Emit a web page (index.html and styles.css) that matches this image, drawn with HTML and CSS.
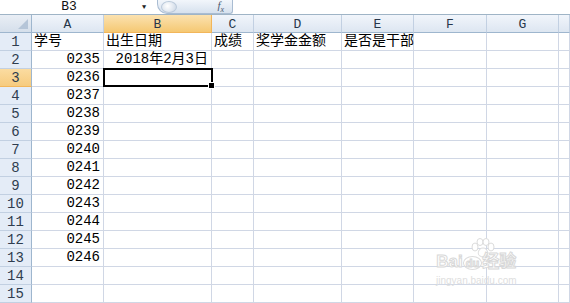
FILE: index.html
```
<!DOCTYPE html>
<html lang="zh-CN">
<head>
    <meta charset="UTF-8">
    <title>Sheet1</title>
    <link rel="stylesheet" href="styles.css">
</head>
<body>
    <div class="formula-bar">
        <div class="name-box">B3</div>
        <div class="name-arrow">&#9660;</div>
        <div class="fx-pill">
            <span class="pill-knob"></span>
            <span class="fx">f<sub>x</sub></span>
        </div>
        <div class="formula-input"></div>
    </div>

    <div class="sheet">
        <div class="corner"></div>
        <div class="col-head">A</div>
        <div class="col-head active">B</div>
        <div class="col-head">C</div>
        <div class="col-head">D</div>
        <div class="col-head">E</div>
        <div class="col-head">F</div>
        <div class="col-head">G</div>
        <div class="col-head"></div>

        <div class="row-head">1</div>
        <div class="cell">学号</div>
        <div class="cell">出生日期</div>
        <div class="cell">成绩</div>
        <div class="cell">奖学金金额</div>
        <div class="cell overflow">是否是干部</div>
        <div class="cell"></div><div class="cell"></div><div class="cell"></div>

        <div class="row-head">2</div>
        <div class="cell num">0235</div>
        <div class="cell num">2018年2月3日</div>
        <div class="cell"></div><div class="cell"></div><div class="cell"></div><div class="cell"></div><div class="cell"></div><div class="cell"></div>

        <div class="row-head active">3</div>
        <div class="cell num">0236</div>
        <div class="cell selected"></div>
        <div class="cell"></div><div class="cell"></div><div class="cell"></div><div class="cell"></div><div class="cell"></div><div class="cell"></div>
    </div>

    <div class="sheet" id="rest"></div>

    <div class="watermark">
        <svg class="wm-paw" width="26" height="20" viewBox="0 0 26 20">
            <g fill="#fff" stroke="#dcdcdc" stroke-width="1">
                <ellipse cx="5" cy="9" rx="3" ry="4"/>
                <ellipse cx="10" cy="4" rx="3" ry="3.5"/>
                <ellipse cx="16" cy="4" rx="3" ry="3.5"/>
                <ellipse cx="21" cy="9" rx="3" ry="4"/>
                <path d="M13 10 C8 10 7 17 10 18 C12 19 14 19 16 18 C19 17 18 10 13 10 Z"/>
            </g>
        </svg>
        <div class="wm-logo">Bai<span class="wm-du">du</span>经验</div>
        <div class="wm-url">jingyan.baidu.com</div>
    </div>

    <script>
        var rest = document.getElementById('rest');
        for (var r = 4; r <= 15; r++) {
            var html = '<div class="row-head">' + r + '</div>';
            var id = r <= 13 ? '0' + (233 + r) : '';
            html += '<div class="cell num">' + id + '</div>';
            for (var c = 0; c < 7; c++) html += '<div class="cell"></div>';
            rest.insertAdjacentHTML('beforeend', html);
        }
    </script>
</body>
</html>
```

FILE: styles.css
```
* {
    margin: 0;
    padding: 0;
    box-sizing: border-box;
}

body {
    width: 570px;
    height: 303px;
    overflow: hidden;
    background: #fff;
    font-family: "Liberation Mono", "Noto Sans CJK SC", monospace;
    font-size: 13px;
    color: #000;
    position: relative;
}

.formula-bar {
    height: 15px;
    display: flex;
    align-items: center;
    border-bottom: 1px solid #9fb4c6;
    background: #fff;
}

.name-box {
    width: 138px;
    text-align: center;
    font-size: 13px;
    line-height: 14px;
    color: #111;
}

.name-arrow {
    width: 19px;
    font-size: 7px;
    color: #222;
    text-align: left;
    padding-left: 4px;
}

.fx-pill {
    width: 76px;
    height: 14px;
    display: flex;
    align-items: center;
    justify-content: space-between;
    background: linear-gradient(#f2f6fb, #d6e1ee);
    border: 1px solid #a9bcd2;
    border-top: none;
    border-radius: 0 0 3px 10px;
    padding: 0 8px 0 3px;
}

.pill-knob {
    width: 16px;
    height: 12px;
    border-radius: 50%;
    background: radial-gradient(circle at 40% 40%, #ffffff, #c9d5e4);
    border: 1px solid #bac9da;
}

.fx {
    font-family: "Liberation Serif", serif;
    font-style: italic;
    font-size: 11px;
    color: #4a5a70;
}

.fx sub {
    font-size: 8px;
}

.formula-input {
    flex: 1;
}

.sheet {
    display: grid;
    grid-template-columns: 32px 72px 108px 42px 88px 72px 73px 72px 1fr;
    grid-auto-rows: 18px;
}

.sheet:first-of-type {
    grid-template-rows: 21px;
}

.corner {
    background: linear-gradient(#e9eef5, #d5dfeb);
    border-right: 1px solid #9eb6ce;
    border-bottom: 1px solid #9eb6ce;
    position: relative;
}

.corner::after {
    content: "";
    position: absolute;
    right: 3px;
    bottom: 3px;
    border-left: 10px solid transparent;
    border-bottom: 10px solid #b5c5d8;
}

.col-head {
    background: linear-gradient(#f1f5fb, #dde6f1);
    border-right: 1px solid #c2d0e2;
    border-bottom: 1px solid #9eb6ce;
    text-align: center;
    line-height: 20px;
    font-family: "Liberation Mono", monospace;
    font-size: 13px;
    color: #27364a;
}

.col-head.active {
    background: linear-gradient(#fbe2b0, #f5c873);
    border-right-color: #f2b65a;
    border-bottom-color: #f2b65a;
}

.row-head {
    background: #e4ecf7;
    border-right: 1px solid #9eb6ce;
    border-bottom: 1px solid #c2d0e2;
    text-align: center;
    line-height: 18px;
    font-family: "Liberation Mono", monospace;
    font-size: 14px;
    color: #2f3d4f;
}

.row-head.active {
    background: linear-gradient(#fbdca1, #f6cb7e);
    border-bottom-color: #f2b65a;
}

.cell {
    border-right: 1px solid #d0d7e5;
    border-bottom: 1px solid #d0d7e5;
    line-height: 17px;
    font-size: 14px;
    padding: 0 2px;
    white-space: nowrap;
    position: relative;
}

.cell.num {
    text-align: right;
    padding-right: 3px;
}

.cell.overflow {
    overflow: visible;
    z-index: 1;
}

.selected::after {
    content: "";
    position: absolute;
    left: -1px;
    top: -1px;
    right: -2px;
    bottom: -1px;
    border: 2px solid #000;
}

.selected::before {
    content: "";
    position: absolute;
    right: -4px;
    bottom: -3px;
    width: 5px;
    height: 5px;
    background: #000;
    border: 1px solid #fff;
    z-index: 2;
}

.watermark {
    position: absolute;
    left: 436px;
    top: 238px;
    color: #e2e2e2;
    text-align: center;
    font-family: "Liberation Sans", "Noto Sans CJK SC", sans-serif;
}

.wm-paw {
    display: block;
    margin: 0 auto -6px 34px;
}

.wm-logo {
    font-size: 17px;
    font-weight: bold;
    line-height: 20px;
    -webkit-text-stroke: 1px #d8d8d8;
    color: #fff;
}

.wm-du {
    font-size: 11px;
    border: 1px solid #dcdcdc;
    border-radius: 50%;
    padding: 0 2px;
}

.wm-url {
    font-size: 10px;
    color: #dedede;
    margin-top: 2px;
}
```
